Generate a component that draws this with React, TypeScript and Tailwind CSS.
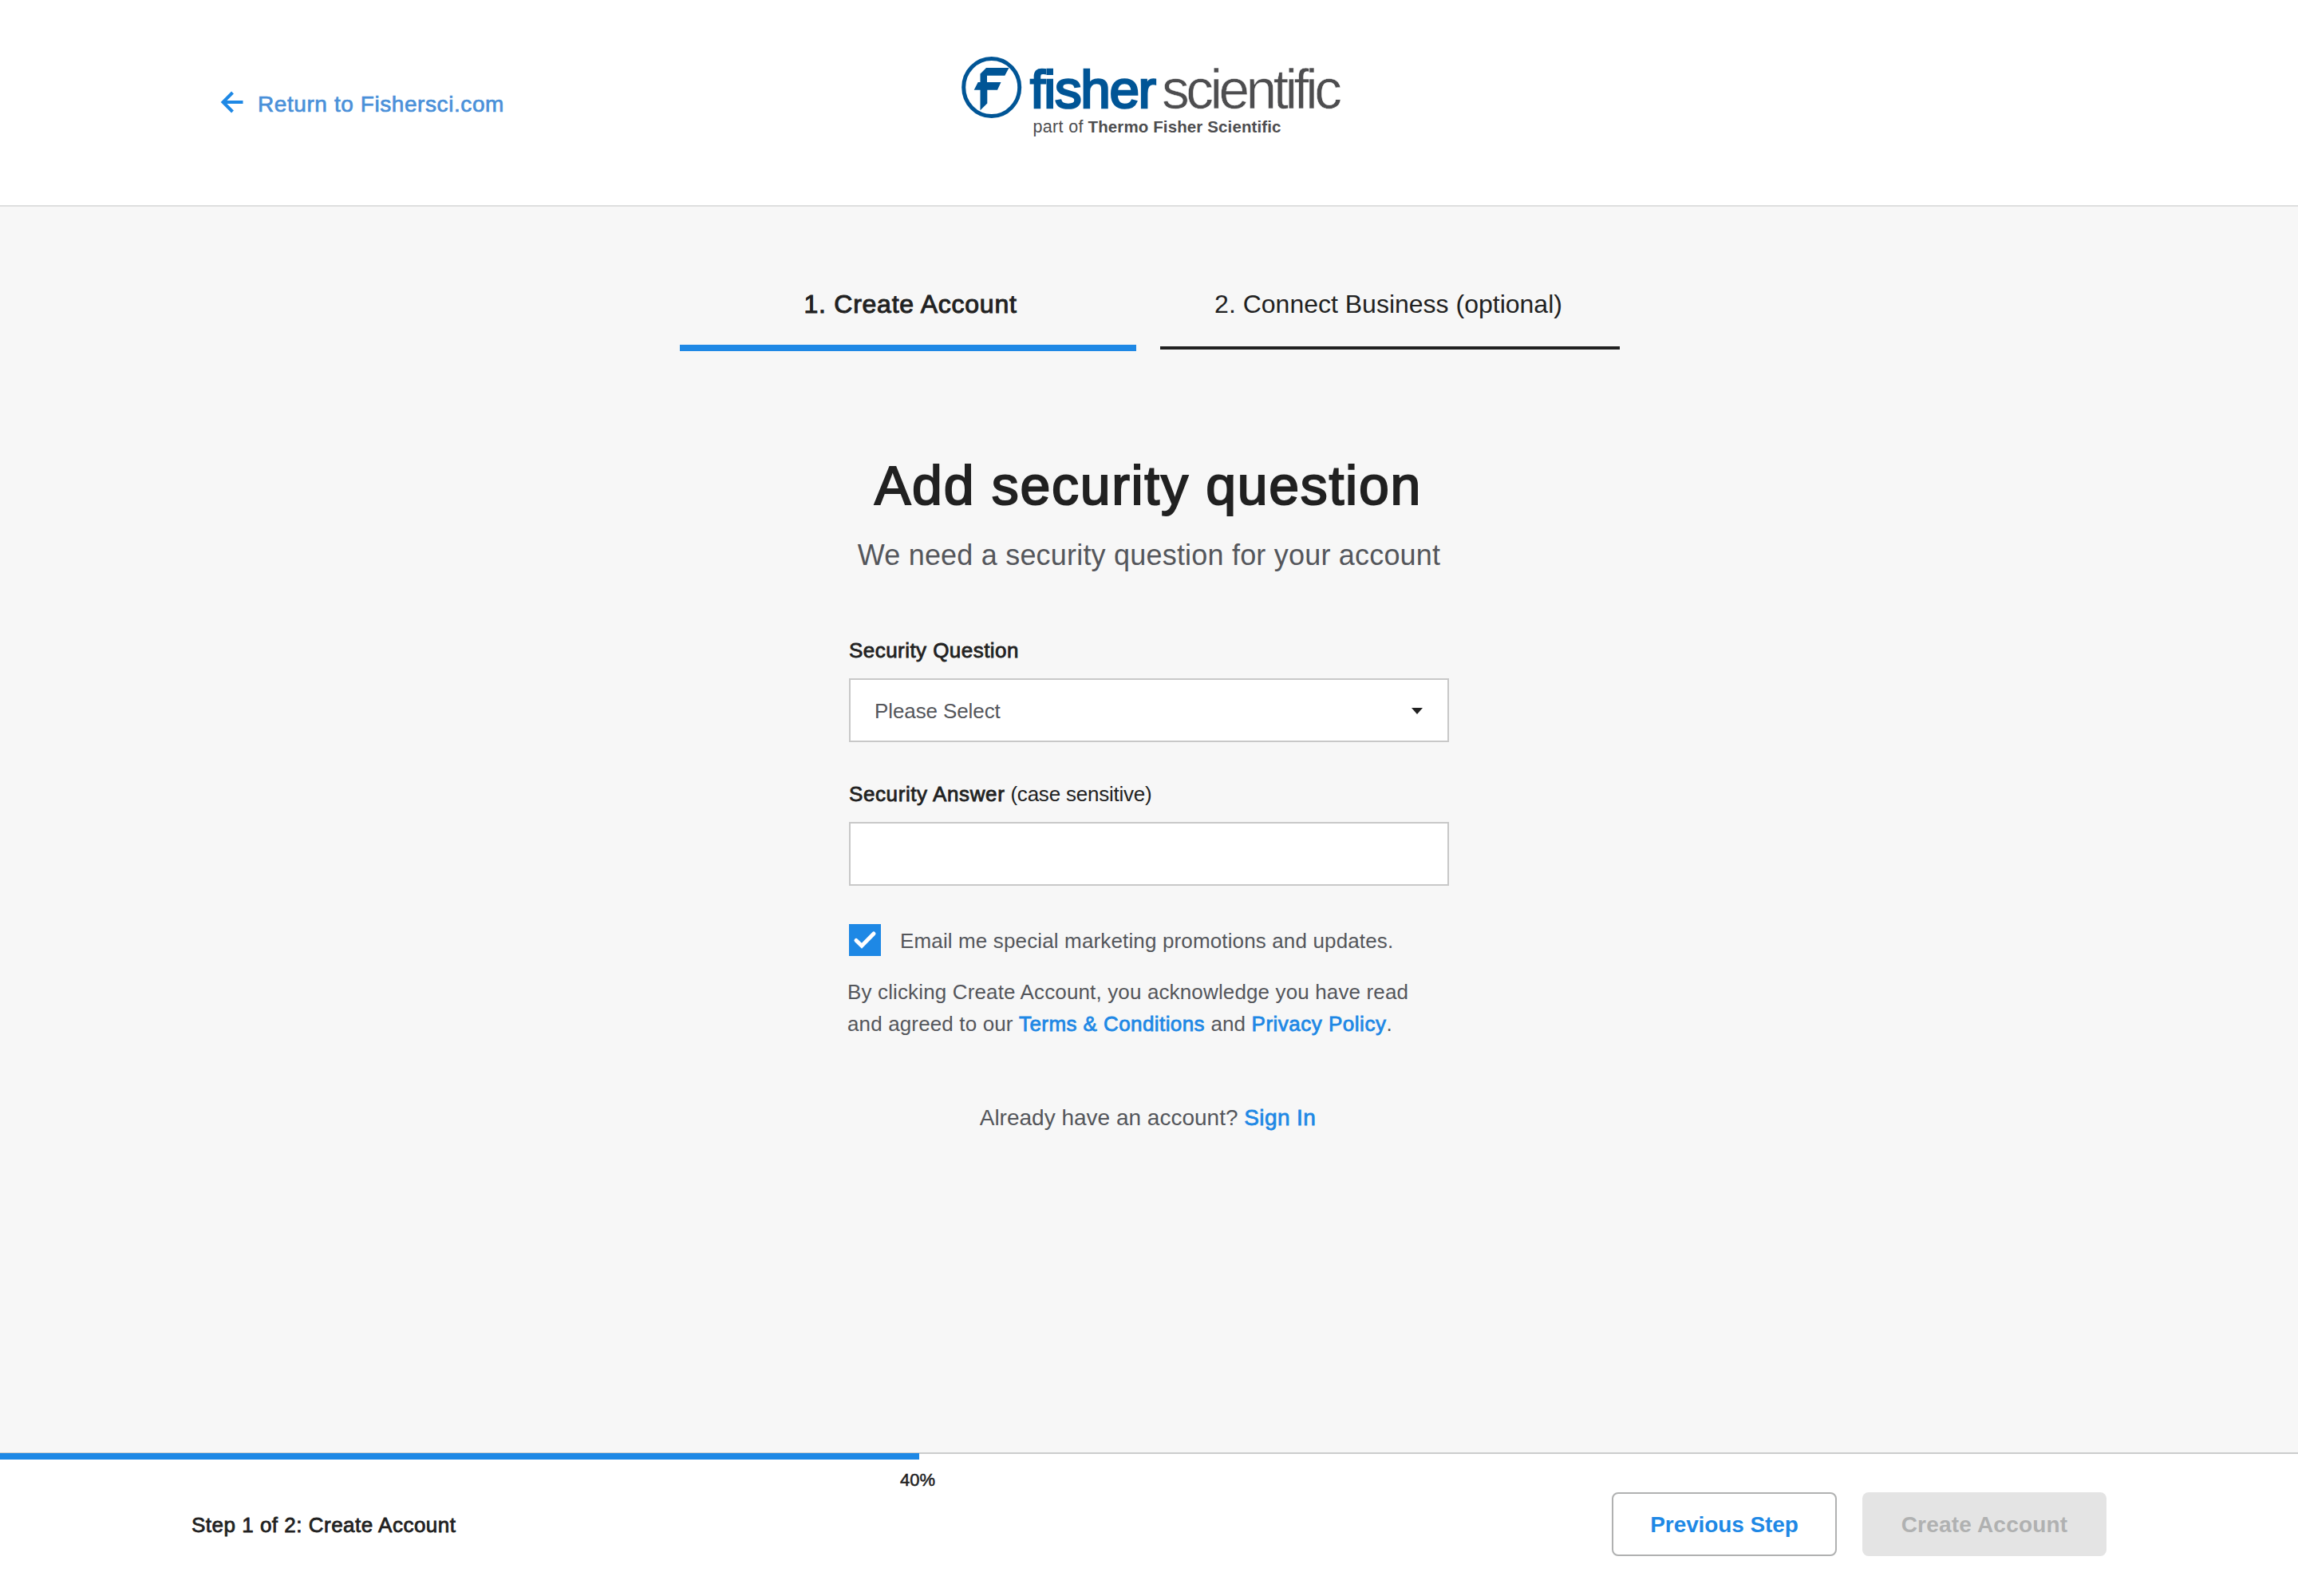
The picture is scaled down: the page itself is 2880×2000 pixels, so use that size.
const steps = [
  { label: "1. Create Account", active: true },
  { label: "2. Connect Business (optional)", active: false },
];

function Logo() {
  return (
    <svg
      className="ml-[570px] mt-[66px] h-[110px] w-[490px] shrink-0"
      viewBox="1200 66 490 110"
      fontFamily="'Liberation Sans', Arial, sans-serif"
    >
      <ellipse cx="1242.7" cy="109.5" rx="35" ry="36" fill="none" stroke="#005596" strokeWidth="5" />
      <path
        d="M1236 85h28.500l-5.200 9.700h-22.300v8.300h17.500l-4.500 9.700h-12.700V129.500l-8.800 8.800v-25.600h-7.800l5-9.700h2.800V92.500z"
        fill="#005596"
      />
      <text x="1291" y="135" fontSize="67.500" fill="#005596" stroke="#005596" strokeWidth="2.600" textLength="158" lengthAdjust="spacing">fisher</text>
      <text x="1456" y="136" fontSize="69.500" fill="#4d4d4f" stroke="#fff" strokeWidth="0.6" textLength="226" lengthAdjust="spacing">scientific</text>
      <text x="1294.500" y="166" fontSize="21.500" fill="#4d4d4f" textLength="63" lengthAdjust="spacing">part of</text>
      <text x="1363.500" y="166" fontSize="20.500" fontWeight="700" fill="#4d4d4f" textLength="242" lengthAdjust="spacing">Thermo Fisher Scientific</text>
    </svg>
  );
}

export default function App() {
  return (
    <div className="flex h-[2000px] w-[2880px] flex-col overflow-hidden bg-[#f7f7f7] font-['Liberation_Sans',Arial,sans-serif] text-[#212121]">
      <header className="flex h-[259px] items-start border-b-2 border-[#dedfdf] bg-white">
        <a className="ml-[276px] mt-[110px] flex w-[354px] shrink-0 items-start text-[28px] leading-[42px] tracking-[0.58px] text-[#4a90d9]">
          <svg className="mt-1 h-7 w-7 overflow-visible" viewBox="0 0 28 28" fill="none" stroke="#1e88e5" strokeWidth="4">
            <path d="M28.500 14H3.500M15.500 2L3.500 14l12 12" />
          </svg>
          <span className="ml-[19px] whitespace-nowrap [-webkit-text-stroke:0.7px_#4a90d9]">Return to Fishersci.com</span>
        </a>
        <Logo />
      </header>

      <main className="flex-1 pt-[102px]">
        <nav className="flex gap-[30px] pl-[852px] text-[32px] leading-10">
          {steps.map((step) =>
            step.active ? (
              <div key={step.label} className="w-[572px] text-center">
                <div className="pl-[6px] tracking-[0.75px] [-webkit-text-stroke:1px_#212121]">{step.label}</div>
                <div className="mt-[31px] h-2 bg-[#1e88e5]" />
              </div>
            ) : (
              <div key={step.label} className="w-[576px] text-center">
                <div className="pr-[4px]">{step.label}</div>
                <div className="mt-[33px] h-1 bg-[#212121]" />
              </div>
            )
          )}
        </nav>

        <h1 className="mt-32 pr-[2px] text-center text-[68px] leading-20 tracking-[1.7px] [-webkit-text-stroke:2px_#212121]">
          Add security question
        </h1>
        <p className="mt-6 text-center text-[36px] leading-12 tracking-[0.2px] text-[#54565b]">
          We need a security question for your account
        </p>

        <form className="mx-auto mt-[79px] w-[752px] text-[26px]">
          <label className="block leading-8 tracking-[0.45px] [-webkit-text-stroke:0.8px_#212121]">Security Question</label>
          <div className="mt-[19px] flex h-20 items-center justify-between border-2 border-[#c8c8c8] bg-white pl-[30px] pr-[31px] pt-0.5 text-[#54565b]">
            <span className="tracking-[-0.1px]">Please Select</span>
            <svg className="h-2 w-[14px]" viewBox="0 0 14 8" fill="#212121">
              <path d="M0 0h14L7 8z" />
            </svg>
          </div>

          <label className="mt-[49px] block leading-8 tracking-[-0.22px]">
            <span className="tracking-[0.6px] [-webkit-text-stroke:0.8px_#212121]">Security Answer</span> (case sensitive)
          </label>
          <div className="mt-[19px] h-20 border-2 border-[#c8c8c8] bg-white" />

          <div className="mt-12 flex h-10 leading-[42px] text-[#54565b]">
            <div className="flex h-10 w-10 items-center justify-center bg-[#1e88e5]">
              <svg className="h-10 w-10" viewBox="0 0 40 40" fill="none" stroke="#fff" strokeWidth="5" strokeLinecap="round">
                <path d="M9 20.500l7 6.800L31 12" />
              </svg>
            </div>
            <span className="ml-[24px] whitespace-nowrap tracking-[0.14px]">Email me special marketing promotions and updates.</span>
          </div>

          <p className="-ml-[2px] mt-[25px] whitespace-nowrap leading-10 tracking-[0.14px] text-[#54565b]">
            By clicking Create Account, you acknowledge you have read
            <br />
            and agreed to our{" "}
            <a className="tracking-[0.42px] text-[#1e88e5] [-webkit-text-stroke:0.8px_#1e88e5]">Terms &amp; Conditions</a> and{" "}
            <a className="tracking-[0.5px] text-[#1e88e5] [-webkit-text-stroke:0.8px_#1e88e5]">Privacy Policy</a>.
          </p>
        </form>

        <p className="mt-[78px] pr-[3px] text-center text-[28px] leading-10 text-[#54565b]">
          Already have an account?{" "}
          <a className="tracking-[0.4px] text-[#1e88e5] [-webkit-text-stroke:0.8px_#1e88e5]">Sign In</a>
        </p>
      </main>

      <footer className="h-[180px] border-t-2 border-[#cccdcd] bg-white">
        <div className="relative -mt-px h-2 w-2/5 bg-[#1e88e5]">
          <span className="absolute -right-5 top-[22px] text-[22px] leading-6 [-webkit-text-stroke:0.5px_#212121]">40%</span>
        </div>
        <div className="mt-[41px] flex h-20 items-center pl-60 pr-60">
          <span className="pt-0.5 text-[26px] tracking-[0.5px] [-webkit-text-stroke:0.8px_#212121]">Step 1 of 2: Create Account</span>
          <button className="ml-auto h-20 w-[282px] rounded-lg border-2 border-[#b0b1b1] pt-0.5 text-[28px] font-bold tracking-[-0.1px] text-[#1e88e5]">
            Previous Step
          </button>
          <button className="ml-8 h-20 w-[306px] rounded-lg bg-[#e4e4e4] pt-0.5 text-[28px] font-bold tracking-[0.2px] text-[#b0b1b1]">
            Create Account
          </button>
        </div>
      </footer>
    </div>
  );
}
